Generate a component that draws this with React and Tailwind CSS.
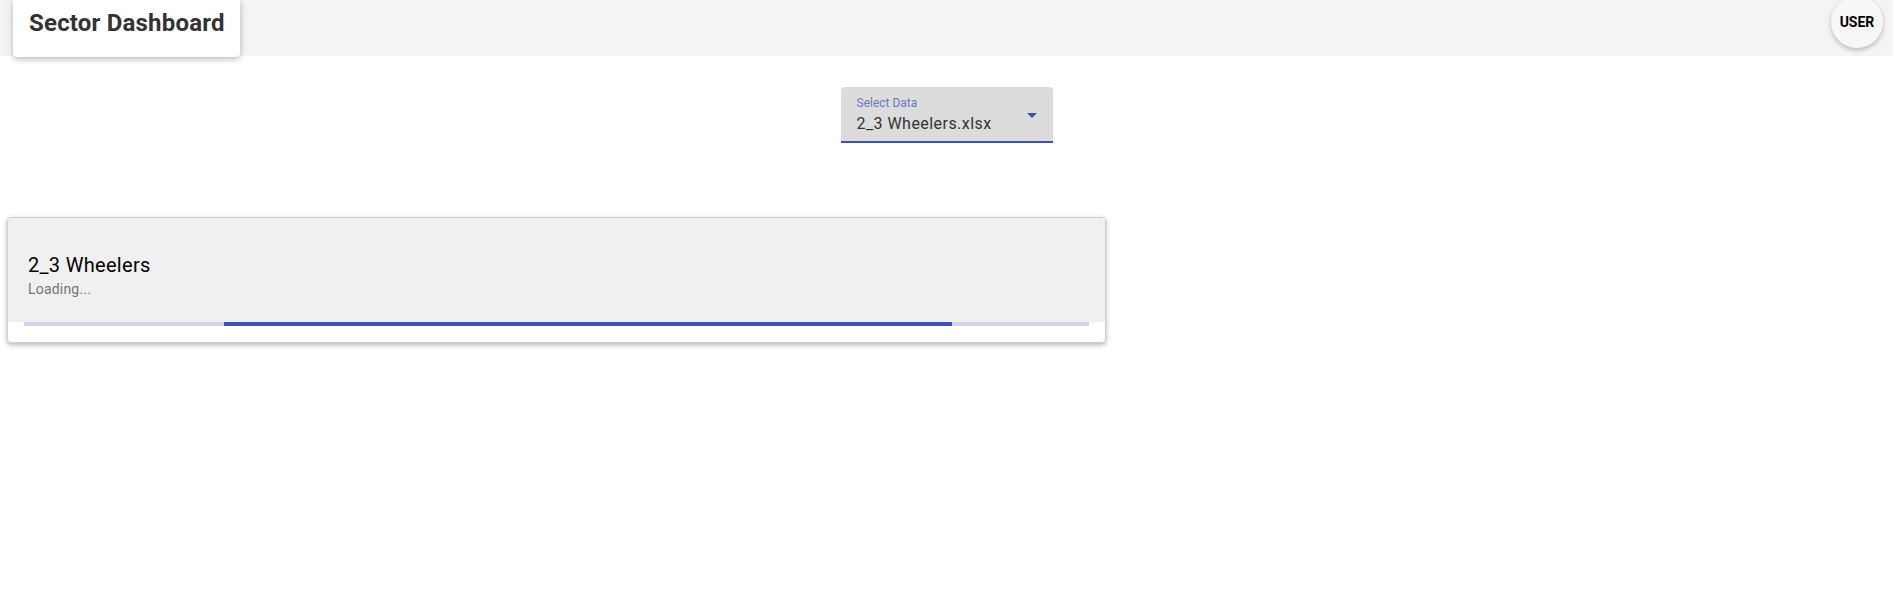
import React from 'react';

const Header = () => (
  <header className="flex h-[56px] items-start justify-between bg-[#f4f4f4]">
    <div className="ml-[13px] h-[57px] w-[227px] rounded-b-[4px] bg-white pl-[16px] pt-[7px] shadow-[0_2px_6px_rgba(0,0,0,0.28)]">
      <h1 className="text-[24px] font-bold leading-[32px] tracking-[0.2px] text-[#333]">Sector Dashboard</h1>
    </div>
    <button className="mr-[10px] mt-[-4px] flex h-[52px] w-[52px] items-center justify-center rounded-full bg-[#f7f7f7] text-[14px] font-bold text-black shadow-[0_2px_5px_rgba(0,0,0,0.25)]">
      USER
    </button>
  </header>
);

const DataSelect = () => (
  <div className="mt-[31px] flex justify-center">
    <div className="relative h-[56px] w-[212px] rounded-t-[4px] border-b-2 border-[#3f51b5] bg-[#dcdcdc] pl-[16px]">
      <div className="pt-[9px] text-[12px] leading-[14px] text-[#6a78c7]">Select Data</div>
      <div className="mt-[4px] text-[16px] leading-[20px] tracking-[0.45px] text-[#333]">2_3 Wheelers.xlsx</div>
      <svg className="absolute right-[16px] top-[26px]" width="10" height="5" viewBox="0 0 10 5">
        <path d="M0 0 L10 0 L5 5 Z" fill="#3f51b5" />
      </svg>
    </div>
  </div>
);

const LoadingCard = () => (
  <div className="ml-[7px] mt-[74px] w-[1099px] overflow-hidden rounded-[4px] border border-[#d0d0d0] bg-white shadow-[0_2px_5px_rgba(0,0,0,0.3)]">
    <div className="h-[104px] bg-[#f0f0f0] px-[20px] pt-[35px]">
      <h2 className="text-[20px] leading-[24px] tracking-[0.3px] text-black">2_3 Wheelers</h2>
      <p className="mt-[3px] text-[14px] leading-[18px] tracking-[0.2px] text-[#757575]">Loading...</p>
    </div>
    <div className="px-[16px] pb-[16px]">
      <div className="flex h-[4px] bg-[#cfd3ec]">
        <div className="ml-[200px] w-[728px] bg-[#3f51b5]" />
      </div>
    </div>
  </div>
);

export default function App() {
  return (
    <div className="min-h-[601px] bg-white font-['Roboto',sans-serif]">
      <Header />
      <DataSelect />
      <LoadingCard />
    </div>
  );
}
